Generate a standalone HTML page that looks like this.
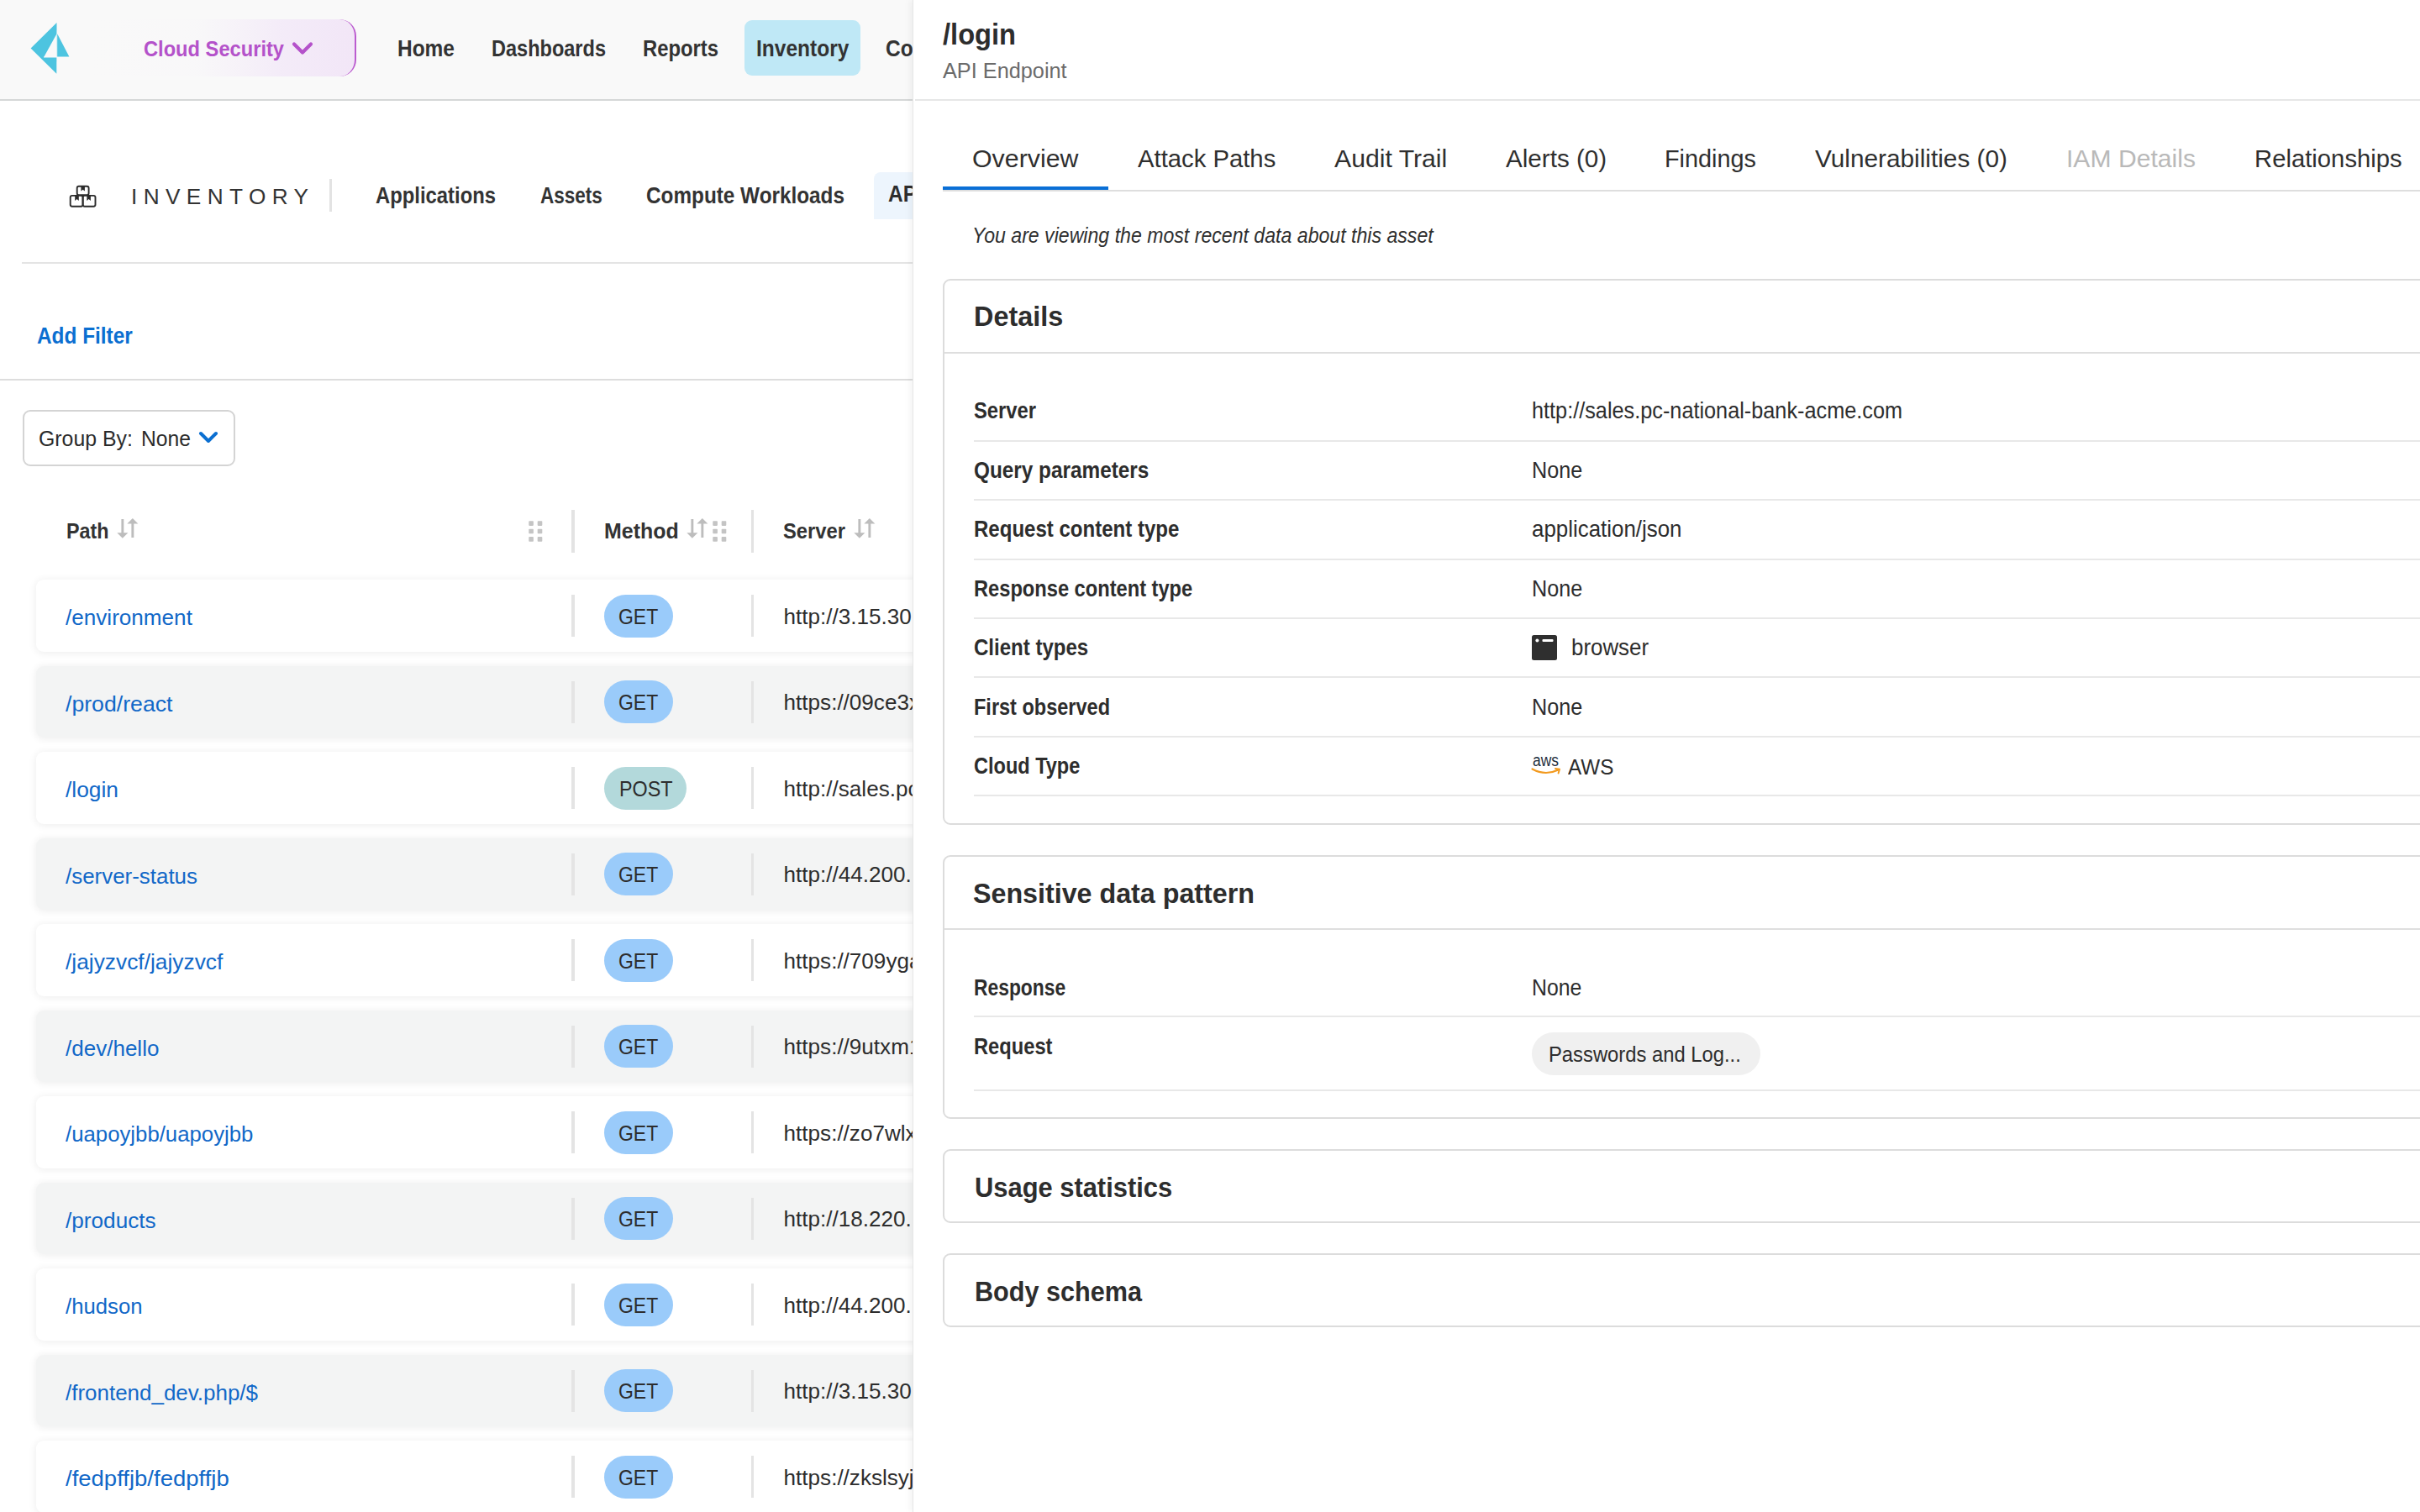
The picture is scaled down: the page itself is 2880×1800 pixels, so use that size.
<!DOCTYPE html>
<html><head><meta charset="utf-8"><style>
html,body{margin:0;padding:0;width:2880px;height:1800px;overflow:hidden;background:#fff;font-family:'Liberation Sans', sans-serif;}
.g{position:absolute;left:0;top:0;width:2880px;height:1800px;overflow:hidden;}
.t{position:absolute;line-height:0;white-space:nowrap;transform-origin:0 0;}
@media (max-width:2000px){html{zoom:0.5;}}
</style></head><body>
<div class="g" style="z-index:1">
<div style="position:absolute;left:0px;top:0px;width:1100px;height:118px;background:#f9f9f9;"></div>
<div style="position:absolute;left:0px;top:117.5px;width:1100px;height:2.0px;background:#d5d7d7;"></div>
<svg style="position:absolute;left:0;top:0" width="120" height="120" viewBox="0 0 120 120">
<polygon points="67.5,27 36.6,57.6 67.3,87.8" fill="#4dc4e0"/>
<polygon points="67.5,40.2 52.2,68 67.5,68" fill="#f9f9f9"/>
<polygon points="68.2,40.2 82.4,67.6 68.2,67.6" fill="#4dc4e0"/>
<rect x="52" y="67.6" width="16" height="0.9" fill="#f9f9f9"/>
</svg>
<div style="position:absolute;left:108px;top:23px;width:316px;height:68px;border-radius:0 20px 20px 0;background:linear-gradient(90deg,rgba(243,234,248,0) 0%,rgba(243,234,248,0.08) 40%,rgba(243,234,248,0.5) 58%,rgba(243,234,248,0.9) 72%,#f2e6f7 100%);border-right:2.2px solid #bb5ccf;box-sizing:border-box;"></div>
<div class="t" style="left:171.00px;top:58.06px;font-size:26.09px;color:#b452ca;font-weight:700;transform:scaleX(0.9075);">Cloud Security</div>
<svg style="position:absolute;left:346px;top:48px" width="30" height="22" viewBox="0 0 30 22"><polyline points="4,4.5 14,14.5 24,4.5" fill="none" stroke="#b452ca" stroke-width="4.2" stroke-linecap="round" stroke-linejoin="round"/></svg>
<div style="position:absolute;left:886px;top:24.4px;width:137.70000000000005px;height:65.5px;background:#bfe8f6;border-radius:9px;"></div>
<div class="t" style="left:473.00px;top:57.97px;font-size:27.21px;color:#333;font-weight:700;transform:scaleX(0.8995);">Home</div>
<div class="t" style="left:585.00px;top:57.97px;font-size:27.21px;color:#333;font-weight:700;transform:scaleX(0.8650);">Dashboards</div>
<div class="t" style="left:765.00px;top:57.97px;font-size:27.21px;color:#333;font-weight:700;transform:scaleX(0.8755);">Reports</div>
<div class="t" style="left:899.60px;top:57.97px;font-size:27.21px;color:#333;font-weight:700;transform:scaleX(0.9016);">Inventory</div>
<div class="t" style="left:1054.00px;top:57.97px;font-size:27.21px;color:#333;font-weight:700;transform:scaleX(0.9000);">Compliance</div>
<svg style="position:absolute;left:76px;top:214px" width="44" height="38" viewBox="0 0 44 38">
<g fill="none" stroke="#2b2b2b" stroke-width="1.9" stroke-linejoin="round">
<rect x="15.7" y="7.7" width="13.9" height="10.4" rx="2.2"/>
<rect x="7.7" y="18.9" width="14.9" height="12.9" rx="2.2"/>
<rect x="22.6" y="18.9" width="14.9" height="12.9" rx="2.2"/>
</g><g fill="#2b2b2b"><polygon points="20.4,7.5 24.9,7.5 24.9,13.6 22.65,11.799999999999999 20.4,13.6"/><polygon points="13.2,18.5 17.8,18.5 17.8,24.9 15.5,23.099999999999998 13.2,24.9"/><polygon points="27.4,18.5 31.9,18.5 31.9,24.9 29.65,23.099999999999998 27.4,24.9"/></g>
</svg>
<div class="t" style="left:156.00px;top:233.61px;font-size:26.23px;color:#333;letter-spacing:7.373046875px;">INVENTORY</div>
<div style="position:absolute;left:391.5px;top:212.5px;width:3.5px;height:39.5px;background:#e3e3e3;"></div>
<div class="t" style="left:447.00px;top:233.17px;font-size:27.21px;color:#333;font-weight:700;transform:scaleX(0.8760);">Applications</div>
<div class="t" style="left:642.60px;top:233.17px;font-size:27.21px;color:#333;font-weight:700;transform:scaleX(0.8282);">Assets</div>
<div class="t" style="left:769.00px;top:233.17px;font-size:27.21px;color:#333;font-weight:700;transform:scaleX(0.8939);">Compute Workloads</div>
<div style="position:absolute;left:1040px;top:205.3px;width:60px;height:55.599999999999966px;background:#edf5fd;border-radius:8px 0 0 0;"></div>
<div class="t" style="left:1057.00px;top:230.87px;font-size:27.21px;color:#2d2d2d;font-weight:700;transform:scaleX(0.9000);">API Endpoints</div>
<div style="position:absolute;left:26px;top:311.5px;width:1074px;height:2.0px;background:#e4e4e4;"></div>
<div class="t" style="left:43.60px;top:399.82px;font-size:27.35px;color:#0b6fd1;font-weight:700;transform:scaleX(0.8918);">Add Filter</div>
<div style="position:absolute;left:0px;top:451px;width:1100px;height:2px;background:#dddddd;"></div>
<div style="position:absolute;left:27px;top:488px;width:253px;height:66.5px;box-sizing:border-box;border:2px solid #d4d4d4;border-radius:9px;background:#fff;"></div>
<div class="t" style="left:45.60px;top:521.71px;font-size:25.95px;color:#2b2b2b;transform:scaleX(0.9573);">Group By:</div>
<div class="t" style="left:168.00px;top:521.71px;font-size:25.95px;color:#2b2b2b;transform:scaleX(0.9498);">None</div>
<svg style="position:absolute;left:234px;top:510px" width="30" height="22" viewBox="0 0 30 22"><polyline points="5,6 14,15 23,6" fill="none" stroke="#0b6fd1" stroke-width="4" stroke-linecap="round" stroke-linejoin="round"/></svg>
<div class="t" style="left:78.80px;top:632.46px;font-size:26.37px;color:#333;font-weight:700;transform:scaleX(0.8858);">Path</div>
<svg style="position:absolute;left:139.3px;top:617px" width="28" height="26" viewBox="0 0 28 26">
<g fill="#bdbdbd"><rect x="5.4" y="1" width="2.9" height="17.5"/><polygon points="0.3,17.3 13.4,17.3 6.85,23.8"/>
<rect x="17.4" y="5.5" width="2.9" height="17.5"/><polygon points="12.3,6.6 25.4,6.6 18.85,0"/></g></svg>
<svg style="position:absolute;left:628.6px;top:619.5px" width="18" height="26" viewBox="0 0 18 26">
<g fill="#c4c4c4"><rect x="0.3" y="0.3" width="5.6" height="5.6" rx="0.8"/><rect x="10.7" y="0.3" width="5.6" height="5.6" rx="0.8"/>
<rect x="0.3" y="9.7" width="5.6" height="5.6" rx="0.8"/><rect x="10.7" y="9.7" width="5.6" height="5.6" rx="0.8"/>
<rect x="0.3" y="19.1" width="5.6" height="5.6" rx="0.8"/><rect x="10.7" y="19.1" width="5.6" height="5.6" rx="0.8"/></g></svg>
<div style="position:absolute;left:680px;top:607px;width:3.5px;height:50.5px;background:#e3e3e3;"></div>
<div class="t" style="left:719.30px;top:632.46px;font-size:26.37px;color:#333;font-weight:700;transform:scaleX(0.9466);">Method</div>
<svg style="position:absolute;left:817px;top:617px" width="28" height="26" viewBox="0 0 28 26">
<g fill="#bdbdbd"><rect x="5.4" y="1" width="2.9" height="17.5"/><polygon points="0.3,17.3 13.4,17.3 6.85,23.8"/>
<rect x="17.4" y="5.5" width="2.9" height="17.5"/><polygon points="12.3,6.6 25.4,6.6 18.85,0"/></g></svg>
<svg style="position:absolute;left:847.5px;top:619.5px" width="18" height="26" viewBox="0 0 18 26">
<g fill="#c4c4c4"><rect x="0.3" y="0.3" width="5.6" height="5.6" rx="0.8"/><rect x="10.7" y="0.3" width="5.6" height="5.6" rx="0.8"/>
<rect x="0.3" y="9.7" width="5.6" height="5.6" rx="0.8"/><rect x="10.7" y="9.7" width="5.6" height="5.6" rx="0.8"/>
<rect x="0.3" y="19.1" width="5.6" height="5.6" rx="0.8"/><rect x="10.7" y="19.1" width="5.6" height="5.6" rx="0.8"/></g></svg>
<div style="position:absolute;left:893.5px;top:607px;width:3.5px;height:50.5px;background:#e3e3e3;"></div>
<div class="t" style="left:932.00px;top:632.46px;font-size:26.37px;color:#333;font-weight:700;transform:scaleX(0.9016);">Server</div>
<svg style="position:absolute;left:1015.5px;top:617px" width="28" height="26" viewBox="0 0 28 26">
<g fill="#bdbdbd"><rect x="5.4" y="1" width="2.9" height="17.5"/><polygon points="0.3,17.3 13.4,17.3 6.85,23.8"/>
<rect x="17.4" y="5.5" width="2.9" height="17.5"/><polygon points="12.3,6.6 25.4,6.6 18.85,0"/></g></svg>
<div style="position:absolute;left:42.5px;top:690.0px;width:1100px;height:85.5px;background:#ffffff;border-radius:9px;box-shadow:0 1px 10px 1px rgba(0,0,0,0.065);"></div>
<div class="t" style="left:77.50px;top:735.37px;font-size:26.65px;color:#1168c8;transform:scaleX(0.9798);">/environment</div>
<div style="position:absolute;left:680px;top:708.0px;width:3.5px;height:50.0px;background:#e4e4e4;"></div>
<div style="position:absolute;left:893.5px;top:708.0px;width:3.5px;height:50.0px;background:#e4e4e4;"></div>
<div style="position:absolute;left:718.5px;top:707.5px;width:82.5px;height:51px;border-radius:26px;background:#9acbfa;"></div>
<div class="t" style="left:736.30px;top:733.66px;font-size:25.81px;color:#2d2d2d;transform:scaleX(0.8900);">GET</div>
<div class="t" style="left:932.60px;top:733.56px;font-size:26.09px;color:#2d2d2d;">http://3.15.30.211</div>
<div style="position:absolute;left:42.5px;top:792.5px;width:1100px;height:85.5px;background:#f3f4f4;border-radius:9px;box-shadow:0 1px 10px 1px rgba(0,0,0,0.065);"></div>
<div class="t" style="left:77.50px;top:837.87px;font-size:26.65px;color:#1168c8;transform:scaleX(1.0011);">/prod/react</div>
<div style="position:absolute;left:680px;top:810.5px;width:3.5px;height:50.0px;background:#e4e4e4;"></div>
<div style="position:absolute;left:893.5px;top:810.5px;width:3.5px;height:50.0px;background:#e4e4e4;"></div>
<div style="position:absolute;left:718.5px;top:810.0px;width:82.5px;height:51px;border-radius:26px;background:#9acbfa;"></div>
<div class="t" style="left:736.30px;top:836.16px;font-size:25.81px;color:#2d2d2d;transform:scaleX(0.8900);">GET</div>
<div class="t" style="left:932.60px;top:836.06px;font-size:26.09px;color:#2d2d2d;">https://09ce3xyz.execute-api</div>
<div style="position:absolute;left:42.5px;top:895.0px;width:1100px;height:85.5px;background:#ffffff;border-radius:9px;box-shadow:0 1px 10px 1px rgba(0,0,0,0.065);"></div>
<div class="t" style="left:77.50px;top:940.37px;font-size:26.65px;color:#1168c8;transform:scaleX(0.9890);">/login</div>
<div style="position:absolute;left:680px;top:913.0px;width:3.5px;height:50.0px;background:#e4e4e4;"></div>
<div style="position:absolute;left:893.5px;top:913.0px;width:3.5px;height:50.0px;background:#e4e4e4;"></div>
<div style="position:absolute;left:718.5px;top:912.5px;width:98.5px;height:51px;border-radius:26px;background:#b3d9db;"></div>
<div class="t" style="left:736.50px;top:938.66px;font-size:25.81px;color:#2d2d2d;transform:scaleX(0.9039);">POST</div>
<div class="t" style="left:932.60px;top:938.56px;font-size:26.09px;color:#2d2d2d;">http://sales.pc-national-bank</div>
<div style="position:absolute;left:42.5px;top:997.5px;width:1100px;height:85.5px;background:#f3f4f4;border-radius:9px;box-shadow:0 1px 10px 1px rgba(0,0,0,0.065);"></div>
<div class="t" style="left:77.50px;top:1042.87px;font-size:26.65px;color:#1168c8;transform:scaleX(0.9729);">/server-status</div>
<div style="position:absolute;left:680px;top:1015.5px;width:3.5px;height:50.0px;background:#e4e4e4;"></div>
<div style="position:absolute;left:893.5px;top:1015.5px;width:3.5px;height:50.0px;background:#e4e4e4;"></div>
<div style="position:absolute;left:718.5px;top:1015.0px;width:82.5px;height:51px;border-radius:26px;background:#9acbfa;"></div>
<div class="t" style="left:736.30px;top:1041.16px;font-size:25.81px;color:#2d2d2d;transform:scaleX(0.8900);">GET</div>
<div class="t" style="left:932.60px;top:1041.06px;font-size:26.09px;color:#2d2d2d;">http://44.200.12.10</div>
<div style="position:absolute;left:42.5px;top:1100.0px;width:1100px;height:85.5px;background:#ffffff;border-radius:9px;box-shadow:0 1px 10px 1px rgba(0,0,0,0.065);"></div>
<div class="t" style="left:77.50px;top:1145.37px;font-size:26.65px;color:#1168c8;transform:scaleX(0.9885);">/jajyzvcf/jajyzvcf</div>
<div style="position:absolute;left:680px;top:1118.0px;width:3.5px;height:50.0px;background:#e4e4e4;"></div>
<div style="position:absolute;left:893.5px;top:1118.0px;width:3.5px;height:50.0px;background:#e4e4e4;"></div>
<div style="position:absolute;left:718.5px;top:1117.5px;width:82.5px;height:51px;border-radius:26px;background:#9acbfa;"></div>
<div class="t" style="left:736.30px;top:1143.66px;font-size:25.81px;color:#2d2d2d;transform:scaleX(0.8900);">GET</div>
<div class="t" style="left:932.60px;top:1143.56px;font-size:26.09px;color:#2d2d2d;">https://709ygabc.execute</div>
<div style="position:absolute;left:42.5px;top:1202.5px;width:1100px;height:85.5px;background:#f3f4f4;border-radius:9px;box-shadow:0 1px 10px 1px rgba(0,0,0,0.065);"></div>
<div class="t" style="left:77.50px;top:1247.87px;font-size:26.65px;color:#1168c8;transform:scaleX(0.9768);">/dev/hello</div>
<div style="position:absolute;left:680px;top:1220.5px;width:3.5px;height:50.0px;background:#e4e4e4;"></div>
<div style="position:absolute;left:893.5px;top:1220.5px;width:3.5px;height:50.0px;background:#e4e4e4;"></div>
<div style="position:absolute;left:718.5px;top:1220.0px;width:82.5px;height:51px;border-radius:26px;background:#9acbfa;"></div>
<div class="t" style="left:736.30px;top:1246.16px;font-size:25.81px;color:#2d2d2d;transform:scaleX(0.8900);">GET</div>
<div class="t" style="left:932.60px;top:1246.06px;font-size:26.09px;color:#2d2d2d;">https://9utxm1234.execute</div>
<div style="position:absolute;left:42.5px;top:1305.0px;width:1100px;height:85.5px;background:#ffffff;border-radius:9px;box-shadow:0 1px 10px 1px rgba(0,0,0,0.065);"></div>
<div class="t" style="left:77.50px;top:1350.37px;font-size:26.65px;color:#1168c8;transform:scaleX(0.9668);">/uapoyjbb/uapoyjbb</div>
<div style="position:absolute;left:680px;top:1323.0px;width:3.5px;height:50.0px;background:#e4e4e4;"></div>
<div style="position:absolute;left:893.5px;top:1323.0px;width:3.5px;height:50.0px;background:#e4e4e4;"></div>
<div style="position:absolute;left:718.5px;top:1322.5px;width:82.5px;height:51px;border-radius:26px;background:#9acbfa;"></div>
<div class="t" style="left:736.30px;top:1348.66px;font-size:25.81px;color:#2d2d2d;transform:scaleX(0.8900);">GET</div>
<div class="t" style="left:932.60px;top:1348.56px;font-size:26.09px;color:#2d2d2d;">https://zo7wlxabc.execute</div>
<div style="position:absolute;left:42.5px;top:1407.5px;width:1100px;height:85.5px;background:#f3f4f4;border-radius:9px;box-shadow:0 1px 10px 1px rgba(0,0,0,0.065);"></div>
<div class="t" style="left:77.50px;top:1452.87px;font-size:26.65px;color:#1168c8;transform:scaleX(0.9827);">/products</div>
<div style="position:absolute;left:680px;top:1425.5px;width:3.5px;height:50.0px;background:#e4e4e4;"></div>
<div style="position:absolute;left:893.5px;top:1425.5px;width:3.5px;height:50.0px;background:#e4e4e4;"></div>
<div style="position:absolute;left:718.5px;top:1425.0px;width:82.5px;height:51px;border-radius:26px;background:#9acbfa;"></div>
<div class="t" style="left:736.30px;top:1451.16px;font-size:25.81px;color:#2d2d2d;transform:scaleX(0.8900);">GET</div>
<div class="t" style="left:932.60px;top:1451.06px;font-size:26.09px;color:#2d2d2d;">http://18.220.10.1</div>
<div style="position:absolute;left:42.5px;top:1510.0px;width:1100px;height:85.5px;background:#ffffff;border-radius:9px;box-shadow:0 1px 10px 1px rgba(0,0,0,0.065);"></div>
<div class="t" style="left:77.50px;top:1555.37px;font-size:26.65px;color:#1168c8;transform:scaleX(0.9651);">/hudson</div>
<div style="position:absolute;left:680px;top:1528.0px;width:3.5px;height:50.0px;background:#e4e4e4;"></div>
<div style="position:absolute;left:893.5px;top:1528.0px;width:3.5px;height:50.0px;background:#e4e4e4;"></div>
<div style="position:absolute;left:718.5px;top:1527.5px;width:82.5px;height:51px;border-radius:26px;background:#9acbfa;"></div>
<div class="t" style="left:736.30px;top:1553.66px;font-size:25.81px;color:#2d2d2d;transform:scaleX(0.8900);">GET</div>
<div class="t" style="left:932.60px;top:1553.56px;font-size:26.09px;color:#2d2d2d;">http://44.200.12.10</div>
<div style="position:absolute;left:42.5px;top:1612.5px;width:1100px;height:85.5px;background:#f3f4f4;border-radius:9px;box-shadow:0 1px 10px 1px rgba(0,0,0,0.065);"></div>
<div class="t" style="left:77.50px;top:1657.87px;font-size:26.65px;color:#1168c8;transform:scaleX(0.9743);">/frontend_dev.php/$</div>
<div style="position:absolute;left:680px;top:1630.5px;width:3.5px;height:50.0px;background:#e4e4e4;"></div>
<div style="position:absolute;left:893.5px;top:1630.5px;width:3.5px;height:50.0px;background:#e4e4e4;"></div>
<div style="position:absolute;left:718.5px;top:1630.0px;width:82.5px;height:51px;border-radius:26px;background:#9acbfa;"></div>
<div class="t" style="left:736.30px;top:1656.16px;font-size:25.81px;color:#2d2d2d;transform:scaleX(0.8900);">GET</div>
<div class="t" style="left:932.60px;top:1656.06px;font-size:26.09px;color:#2d2d2d;">http://3.15.30.211</div>
<div style="position:absolute;left:42.5px;top:1715.0px;width:1100px;height:85.5px;background:#ffffff;border-radius:9px;box-shadow:0 1px 10px 1px rgba(0,0,0,0.065);"></div>
<div class="t" style="left:77.50px;top:1760.37px;font-size:26.65px;color:#1168c8;transform:scaleX(1.0322);">/fedpffjb/fedpffjb</div>
<div style="position:absolute;left:680px;top:1733.0px;width:3.5px;height:50.0px;background:#e4e4e4;"></div>
<div style="position:absolute;left:893.5px;top:1733.0px;width:3.5px;height:50.0px;background:#e4e4e4;"></div>
<div style="position:absolute;left:718.5px;top:1732.5px;width:82.5px;height:51px;border-radius:26px;background:#9acbfa;"></div>
<div class="t" style="left:736.30px;top:1758.66px;font-size:25.81px;color:#2d2d2d;transform:scaleX(0.8900);">GET</div>
<div class="t" style="left:932.60px;top:1758.56px;font-size:26.09px;color:#2d2d2d;">https://zkslsyjabc.execute</div>
</div>
<div class="g" style="z-index:2">
<div style="position:absolute;left:1085.5px;top:0;width:1800px;height:1800px;background:#fff;box-shadow:-3px 0 8px rgba(0,0,0,0.05);border-left:1.5px solid #e6e7e7;"></div>
<div class="t" style="left:1122.00px;top:41.15px;font-size:35.07px;color:#2d2d2d;font-weight:700;transform:scaleX(0.9306);">/login</div>
<div class="t" style="left:1122.00px;top:83.96px;font-size:26.09px;color:#6b6b6b;transform:scaleX(0.9696);">API Endpoint</div>
<div style="position:absolute;left:1088.5px;top:117.5px;width:1791.5px;height:2.0px;background:#e6e7e7;"></div>
<div class="t" style="left:1156.80px;top:189.10px;font-size:30.30px;color:#2f2f2f;transform:scaleX(1.0011);">Overview</div>
<div class="t" style="left:1354.00px;top:189.10px;font-size:30.30px;color:#2f2f2f;transform:scaleX(0.9659);">Attack Paths</div>
<div class="t" style="left:1588.40px;top:189.10px;font-size:30.30px;color:#2f2f2f;transform:scaleX(0.9961);">Audit Trail</div>
<div class="t" style="left:1791.80px;top:189.10px;font-size:30.30px;color:#2f2f2f;transform:scaleX(0.9773);">Alerts (0)</div>
<div class="t" style="left:1981.00px;top:189.10px;font-size:30.30px;color:#2f2f2f;transform:scaleX(0.9517);">Findings</div>
<div class="t" style="left:2160.00px;top:189.10px;font-size:30.30px;color:#2f2f2f;transform:scaleX(0.9831);">Vulnerabilities (0)</div>
<div class="t" style="left:2459.00px;top:189.10px;font-size:30.30px;color:#b9b9b9;transform:scaleX(0.9942);">IAM Details</div>
<div class="t" style="left:2682.70px;top:189.10px;font-size:30.30px;color:#2f2f2f;transform:scaleX(0.9660);">Relationships</div>
<div style="position:absolute;left:1122px;top:226px;width:1758px;height:2px;background:#dedede;"></div>
<div style="position:absolute;left:1122px;top:222px;width:196.5px;height:4px;background:#0a6fd6;"></div>
<div class="t" style="left:1157.30px;top:280.45px;font-size:25.25px;color:#2f2f2f;font-style:italic;transform:scaleX(0.9155);">You are viewing the most recent data about this asset</div>
<div style="position:absolute;left:1122px;top:332px;width:1800px;height:650px;box-sizing:border-box;border:2px solid #dcdcdc;border-radius:9px;background:#fff;"></div>
<div class="t" style="left:1159.30px;top:376.19px;font-size:34.08px;color:#2d2d2d;font-weight:700;transform:scaleX(0.9502);">Details</div>
<div style="position:absolute;left:1124px;top:418.5px;width:1756px;height:2.0px;background:#dedede;"></div>
<div class="t" style="left:1158.80px;top:489.47px;font-size:26.93px;color:#2d2d2d;font-weight:700;transform:scaleX(0.8838);">Server</div>
<div style="position:absolute;left:1158.8px;top:523.9px;width:1721.2px;height:2.0px;background:#e8e8e8;"></div>
<div class="t" style="left:1823.30px;top:489.47px;font-size:26.93px;color:#2d2d2d;transform:scaleX(0.9386);">http://sales.pc-national-bank-acme.com</div>
<div class="t" style="left:1158.80px;top:559.95px;font-size:26.93px;color:#2d2d2d;font-weight:700;transform:scaleX(0.9039);">Query parameters</div>
<div style="position:absolute;left:1158.8px;top:594.28px;width:1721.2px;height:2.0px;background:#e8e8e8;"></div>
<div class="t" style="left:1823.30px;top:559.95px;font-size:26.93px;color:#2d2d2d;transform:scaleX(0.9351);">None</div>
<div class="t" style="left:1158.80px;top:630.43px;font-size:26.93px;color:#2d2d2d;font-weight:700;transform:scaleX(0.8924);">Request content type</div>
<div style="position:absolute;left:1158.8px;top:664.66px;width:1721.2px;height:2.0px;background:#e8e8e8;"></div>
<div class="t" style="left:1823.30px;top:630.43px;font-size:26.93px;color:#2d2d2d;transform:scaleX(0.9618);">application/json</div>
<div class="t" style="left:1158.80px;top:700.91px;font-size:26.93px;color:#2d2d2d;font-weight:700;transform:scaleX(0.8785);">Response content type</div>
<div style="position:absolute;left:1158.8px;top:735.04px;width:1721.2px;height:2.0px;background:#e8e8e8;"></div>
<div class="t" style="left:1823.30px;top:700.91px;font-size:26.93px;color:#2d2d2d;transform:scaleX(0.9351);">None</div>
<div class="t" style="left:1158.80px;top:771.39px;font-size:26.93px;color:#2d2d2d;font-weight:700;transform:scaleX(0.8926);">Client types</div>
<div style="position:absolute;left:1158.8px;top:805.42px;width:1721.2px;height:2.0px;background:#e8e8e8;"></div>
<svg style="position:absolute;left:1822.7px;top:756px" width="30" height="30" viewBox="0 0 30 30">
<rect x="0" y="0" width="30" height="30" rx="2.5" fill="#2f2f2f"/>
<circle cx="6.4" cy="6.4" r="2" fill="#fff"/><rect x="12.5" y="4.9" width="13" height="3.2" rx="1" fill="#fff"/></svg>
<div class="t" style="left:1870.00px;top:771.39px;font-size:26.93px;color:#2d2d2d;transform:scaleX(0.9607);">browser</div>
<div class="t" style="left:1158.80px;top:841.87px;font-size:26.93px;color:#2d2d2d;font-weight:700;transform:scaleX(0.8732);">First observed</div>
<div style="position:absolute;left:1158.8px;top:875.8px;width:1721.2px;height:2.0px;background:#e8e8e8;"></div>
<div class="t" style="left:1823.30px;top:841.87px;font-size:26.93px;color:#2d2d2d;transform:scaleX(0.9351);">None</div>
<div class="t" style="left:1158.80px;top:912.35px;font-size:26.93px;color:#2d2d2d;font-weight:700;transform:scaleX(0.8736);">Cloud Type</div>
<div style="position:absolute;left:1158.8px;top:946.18px;width:1721.2px;height:2.0px;background:#e8e8e8;"></div>
<svg style="position:absolute;left:1821px;top:898px" width="40" height="28" viewBox="0 0 40 28">
<text x="3" y="14.1" font-family="Liberation Sans" font-size="19.5" fill="#232f3e" textLength="31" lengthAdjust="spacingAndGlyphs">aws</text>
<path d="M2.5,17.5 Q18,26 33.5,18.5" fill="none" stroke="#f29a1f" stroke-width="2.2" stroke-linecap="round"/>
<path d="M30,17 L35,17.8 L33.6,22.5" fill="none" stroke="#f29a1f" stroke-width="2" stroke-linecap="round" stroke-linejoin="round"/></svg>
<div class="t" style="left:1866.20px;top:912.64px;font-size:26.09px;color:#2d2d2d;transform:scaleX(0.9292);">AWS</div>
<div style="position:absolute;left:1122px;top:1018px;width:1800px;height:314px;box-sizing:border-box;border:2px solid #dcdcdc;border-radius:9px;background:#fff;"></div>
<div class="t" style="left:1158.00px;top:1063.19px;font-size:34.08px;color:#2d2d2d;font-weight:700;transform:scaleX(0.9459);">Sensitive data pattern</div>
<div style="position:absolute;left:1124px;top:1104.5px;width:1756px;height:2.0px;background:#dedede;"></div>
<div class="t" style="left:1158.80px;top:1175.67px;font-size:26.93px;color:#2d2d2d;font-weight:700;transform:scaleX(0.8487);">Response</div>
<div class="t" style="left:1823.30px;top:1175.67px;font-size:26.93px;color:#2d2d2d;transform:scaleX(0.9227);">None</div>
<div style="position:absolute;left:1158.8px;top:1209px;width:1721.2px;height:2px;background:#e8e8e8;"></div>
<div class="t" style="left:1158.80px;top:1246.17px;font-size:26.93px;color:#2d2d2d;font-weight:700;transform:scaleX(0.8803);">Request</div>
<div style="position:absolute;left:1822.7px;top:1228.6px;width:272.8px;height:51px;border-radius:26px;background:#f0f0f0;"></div>
<div class="t" style="left:1843.00px;top:1254.56px;font-size:26.09px;color:#2d2d2d;transform:scaleX(0.9123);">Passwords and Log...</div>
<div style="position:absolute;left:1158.8px;top:1296.7px;width:1721.2px;height:2.0px;background:#e8e8e8;"></div>
<div style="position:absolute;left:1122px;top:1368px;width:1800px;height:88px;box-sizing:border-box;border:2px solid #dcdcdc;border-radius:9px;background:#fff;"></div>
<div class="t" style="left:1159.50px;top:1412.99px;font-size:34.08px;color:#2d2d2d;font-weight:700;transform:scaleX(0.9060);">Usage statistics</div>
<div style="position:absolute;left:1122px;top:1491.7px;width:1800px;height:88.29999999999995px;box-sizing:border-box;border:2px solid #dcdcdc;border-radius:9px;background:#fff;"></div>
<div class="t" style="left:1159.50px;top:1536.99px;font-size:34.08px;color:#2d2d2d;font-weight:700;transform:scaleX(0.8985);">Body schema</div>
</div>
</body></html>
